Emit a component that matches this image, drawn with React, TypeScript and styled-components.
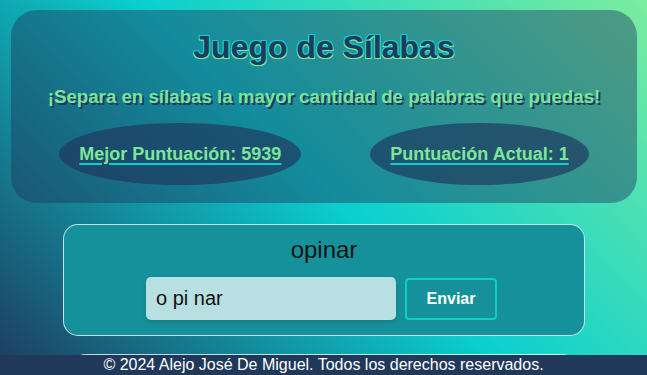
import styled, { createGlobalStyle } from 'styled-components';
import { useState } from 'react';

const GlobalStyle = createGlobalStyle`
  * {
    box-sizing: border-box;
  }
  body {
    margin: 0;
    min-height: 100vh;
    font-family: "Liberation Sans", Arial, sans-serif;
    background: linear-gradient(45deg, #1e3a5f 0%, #0acfcf 50%, #7bed9f 100%);
    background-attachment: fixed;
  }
`;

const Page = styled.div`
  padding: 10px 10px 0 11px;
  display: flex;
  flex-direction: column;
  align-items: center;
`;

const Header = styled.header`
  width: 100%;
  background: rgba(30, 58, 95, 0.45);
  border-radius: 26px;
  padding: 17px 20px 18px;
  display: flex;
  flex-direction: column;
  align-items: center;
`;

const Title = styled.h1`
  margin: 0;
  font-size: 32px;
  line-height: 40px;
  font-weight: bold;
  color: #1f3a5a;
  text-shadow: -1px -1px 0 #0acfcf, 1px -1px 0 #0acfcf, -1px 1px 0 #7bed9f, 1px 1px 0 #7bed9f;
`;

const Subtitle = styled.p`
  margin: 18px 0 0;
  font-size: 18.7px;
  line-height: 23px;
  font-weight: bold;
  color: #7be39a;
  text-shadow: 2px 2px 0 #1e3a5f;
`;

const Scores = styled.div`
  display: flex;
  justify-content: center;
  gap: 69px;
  margin-top: 15px;
  width: 100%;
`;

const ScorePill = styled.div`
  height: 62px;
  padding: 0 20px;
  border-radius: 50%;
  background: rgba(30, 58, 95, 0.7);
  display: flex;
  align-items: center;
  justify-content: center;
`;

const ScoreText = styled.span`
  font-size: 18px;
  font-weight: bold;
  color: #7de69b;
  text-decoration: underline;
  text-decoration-color: #0acfcf;
  text-decoration-thickness: 2px;
  text-underline-offset: 3px;
`;

const GameCard = styled.section`
  margin-top: 21px;
  width: 522px;
  background: #15919b;
  border: 1px solid rgba(255, 255, 255, 0.75);
  border-radius: 15px;
  padding: 10px 0 15px;
  display: flex;
  flex-direction: column;
  align-items: center;
`;

const Word = styled.div`
  font-size: 24px;
  line-height: 30px;
  color: #111;
`;

const AnswerRow = styled.form`
  margin: 11px 5px 0 0;
  display: flex;
  align-items: center;
  gap: 9px;
`;

const AnswerInput = styled.input`
  width: 250px;
  height: 43px;
  border: none;
  border-radius: 5px;
  background: #b8dfe2;
  padding: 0 10px;
  font-family: "Liberation Sans", Arial, sans-serif;
  font-size: 20px;
  color: #111;
  box-shadow: 0 2px 4px rgba(0, 0, 0, 0.15);
  outline: none;
`;

const SendButton = styled.button`
  width: 92px;
  height: 42px;
  margin-top: 2px;
  background: transparent;
  border: 2px solid #0fd0c8;
  border-radius: 4px;
  color: #fff;
  font-family: "Liberation Sans", Arial, sans-serif;
  font-size: 16px;
  font-weight: bold;
  cursor: pointer;
`;

const HistoryCard = styled.section`
  margin-top: 18px;
  width: 506px;
  height: 30px;
  border-top: 1px solid rgba(255, 255, 255, 0.75);
  border-radius: 15px 15px 0 0;
`;

const Footer = styled.footer`
  position: fixed;
  left: 0;
  right: 0;
  bottom: 0;
  height: 20px;
  background: #20385a;
  color: #fff;
  font-size: 16px;
  line-height: 20px;
  text-align: center;
`;

export default function App() {
  const [answer, setAnswer] = useState('o pi nar');

  return (
    <>
      <GlobalStyle />
      <Page>
        <Header>
          <Title>Juego de Sílabas</Title>
          <Subtitle>¡Separa en sílabas la mayor cantidad de palabras que puedas!</Subtitle>
          <Scores>
            <ScorePill>
              <ScoreText>Mejor Puntuación: 5939</ScoreText>
            </ScorePill>
            <ScorePill>
              <ScoreText>Puntuación Actual: 1</ScoreText>
            </ScorePill>
          </Scores>
        </Header>

        <GameCard>
          <Word>opinar</Word>
          <AnswerRow onSubmit={e => e.preventDefault()}>
            <AnswerInput value={answer} onChange={e => setAnswer(e.target.value)} />
            <SendButton type="submit">Enviar</SendButton>
          </AnswerRow>
        </GameCard>

        <HistoryCard />
      </Page>
      <Footer>© 2024 Alejo José De Miguel. Todos los derechos reservados.</Footer>
    </>
  );
}
